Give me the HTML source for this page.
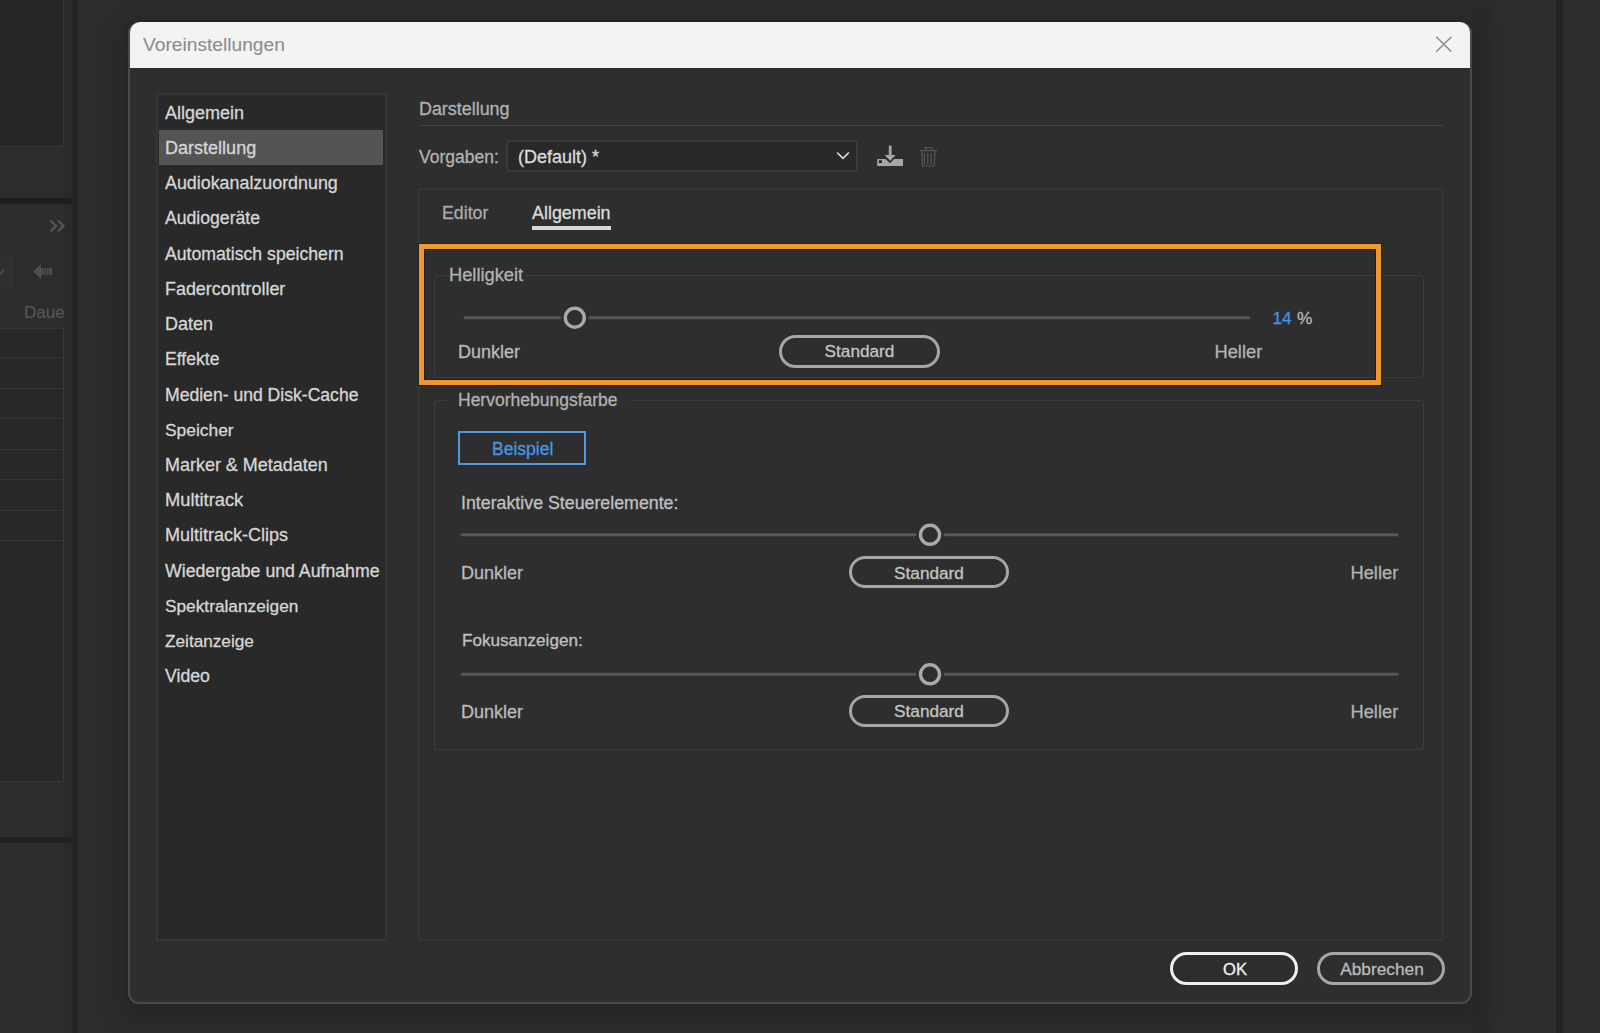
<!DOCTYPE html>
<html><head><meta charset="utf-8">
<style>
*{margin:0;padding:0;box-sizing:border-box}
html,body{width:1600px;height:1033px;overflow:hidden;background:#2c2c2c;font-family:"Liberation Sans",sans-serif}
.a{position:absolute}
.t{position:absolute;white-space:nowrap;font-size:17.5px;line-height:20px;color:#cfcfcf;-webkit-text-stroke:0.3px currentColor}
.bl{position:absolute;background:#1f1f1f}
.btn{position:absolute;border:3px solid #a6a6a6;border-radius:17px}
.track{position:absolute;height:3px;background:#575757}
.thumb{position:absolute;width:23px;height:23px;border:3px solid #a8a8a8;border-radius:50%;background:#2e2e2e}
</style></head><body>

<!-- background app -->
<div class="a" style="left:0;top:0;width:64px;height:147px;background:#262626;border-right:1px solid #363636;border-bottom:1px solid #363636"></div>
<div class="a" style="left:64px;top:0;width:8px;height:1033px;background:#2a2a2a"></div>
<div class="a" style="left:0;top:198px;width:72px;height:6px;background:#1f1f1f"></div>
<div class="a" style="left:0;top:256px;width:14px;height:32px;background:#303030"></div>
<svg class="a" style="left:0;top:262px" width="12" height="16" viewBox="0 0 12 16"><path d="M0 12L4 8" stroke="#4a4a4a" stroke-width="2" fill="none"/></svg>
<svg class="a" style="left:49px;top:219px" width="17" height="14" viewBox="0 0 17 14"><path d="M1.5 1.5L7 7L1.5 12.5M9 1.5L14.5 7L9 12.5" stroke="#555" stroke-width="2.4" fill="none"/></svg>
<svg class="a" style="left:32px;top:263px" width="21" height="17" viewBox="0 0 21 17"><path d="M1 8.5L9 1V5h11v7H9v4z" fill="#4e4e4e"/><path d="M12 5v7M14.5 5v7M17 5v7" stroke="#2c2c2c" stroke-width="0.8"/></svg>
<div class="t" style="left:24px;top:303px;color:#555;font-size:17px">Daue</div>
<div class="a" style="left:17px;top:297px;width:1px;height:31px;background:#303030"></div>
<div class="a" style="left:0;top:328px;width:64px;height:454px;background:#282828;border-right:1px solid #383838;border-bottom:1px solid #383838;border-top:1px solid #383838"></div>
<div class="a" style="left:0;top:357px;width:64px;height:1px;background:#363636"></div>
<div class="a" style="left:0;top:388px;width:64px;height:1px;background:#363636"></div>
<div class="a" style="left:0;top:418px;width:64px;height:1px;background:#363636"></div>
<div class="a" style="left:0;top:449px;width:64px;height:1px;background:#363636"></div>
<div class="a" style="left:0;top:479px;width:64px;height:1px;background:#363636"></div>
<div class="a" style="left:0;top:510px;width:64px;height:1px;background:#363636"></div>
<div class="a" style="left:0;top:540px;width:64px;height:1px;background:#363636"></div>
<div class="a" style="left:0;top:837px;width:72px;height:6px;background:#222"></div>
<div class="a" style="left:72px;top:0;width:6px;height:1033px;background:#232323"></div>
<div class="a" style="left:1472px;top:0;width:18px;height:1033px;background:#2a2a2a"></div>
<div class="a" style="left:1556px;top:0;width:7px;height:1033px;background:#232323"></div>

<!-- dialog -->
<div class="a" style="left:126px;top:20px;width:1348px;height:988px;border-radius:13px;background:#262626;box-shadow:0 8px 24px 6px rgba(0,0,0,0.14)"></div>
<div class="a" style="left:128px;top:22px;width:1344px;height:982px;border-radius:11px;background:#2e2e2e;border:2px solid #4a4a4a;border-top:0"></div>
<div class="a" style="left:130px;top:22px;width:1340px;height:46px;border-radius:10px 10px 0 0;background:#f3f3f3"></div>
<div class="t" style="left:143px;top:34.5px;font-size:19.2px;color:#8c8c8c;-webkit-text-stroke:0.1px #8c8c8c">Voreinstellungen</div>
<svg class="a" style="left:1434px;top:34px" width="20" height="20" viewBox="0 0 20 20"><path d="M2.2 2.7L17.4 17.7M17.4 2.7L2.2 17.7" stroke="#8a8a8a" stroke-width="1.4" fill="none"/></svg>

<!-- list -->
<div class="a" style="left:156px;top:93px;width:231px;height:848px;background:#292929;border:2px solid #363636"></div>
<div class="a" style="left:158px;top:200px;width:227px;height:1px;background:#2c2c2c"></div><div class="a" style="left:158px;top:235px;width:227px;height:1px;background:#2c2c2c"></div><div class="a" style="left:158px;top:270px;width:227px;height:1px;background:#2c2c2c"></div><div class="a" style="left:158px;top:306px;width:227px;height:1px;background:#2c2c2c"></div><div class="a" style="left:158px;top:341px;width:227px;height:1px;background:#2c2c2c"></div><div class="a" style="left:158px;top:376px;width:227px;height:1px;background:#2c2c2c"></div><div class="a" style="left:158px;top:411px;width:227px;height:1px;background:#2c2c2c"></div><div class="a" style="left:158px;top:446px;width:227px;height:1px;background:#2c2c2c"></div><div class="a" style="left:158px;top:481px;width:227px;height:1px;background:#2c2c2c"></div><div class="a" style="left:158px;top:517px;width:227px;height:1px;background:#2c2c2c"></div><div class="a" style="left:158px;top:552px;width:227px;height:1px;background:#2c2c2c"></div><div class="a" style="left:158px;top:587px;width:227px;height:1px;background:#2c2c2c"></div><div class="a" style="left:158px;top:622px;width:227px;height:1px;background:#2c2c2c"></div><div class="a" style="left:158px;top:657px;width:227px;height:1px;background:#2c2c2c"></div><div class="a" style="left:158px;top:693px;width:227px;height:1px;background:#2c2c2c"></div>
<div class="a" style="left:159px;top:130px;width:224px;height:35px;background:#545454"></div>
<div class="t" style="left:165px;top:103px;color:#d6d6d6;font-size:18.0px">Allgemein</div>
<div class="t" style="left:165px;top:138px;color:#d6d6d6;font-size:18.05px">Darstellung</div>
<div class="t" style="left:165px;top:173px;color:#d6d6d6;font-size:17.87px">Audiokanalzuordnung</div>
<div class="t" style="left:165px;top:208px;color:#d6d6d6;font-size:17.61px">Audiogeräte</div>
<div class="t" style="left:165px;top:244px;color:#d6d6d6;font-size:17.67px">Automatisch speichern</div>
<div class="t" style="left:165px;top:279px;color:#d6d6d6;font-size:17.9px">Fadercontroller</div>
<div class="t" style="left:165px;top:314px;color:#d6d6d6;font-size:17.99px">Daten</div>
<div class="t" style="left:165px;top:349px;color:#d6d6d6;font-size:17.6px">Effekte</div>
<div class="t" style="left:165px;top:385px;color:#d6d6d6;font-size:17.59px">Medien- und Disk-Cache</div>
<div class="t" style="left:165px;top:420px;color:#d6d6d6;font-size:17.39px">Speicher</div>
<div class="t" style="left:165px;top:455px;color:#d6d6d6;font-size:17.97px">Marker &amp; Metadaten</div>
<div class="t" style="left:165px;top:490px;color:#d6d6d6;font-size:18.3px">Multitrack</div>
<div class="t" style="left:165px;top:525px;color:#d6d6d6;font-size:18.0px">Multitrack-Clips</div>
<div class="t" style="left:165px;top:561px;color:#d6d6d6;font-size:17.72px">Wiedergabe und Aufnahme</div>
<div class="t" style="left:165px;top:596px;color:#d6d6d6;font-size:17.28px">Spektralanzeigen</div>
<div class="t" style="left:165px;top:631px;color:#d6d6d6;font-size:17.2px">Zeitanzeige</div>
<div class="t" style="left:165px;top:666px;color:#d6d6d6;font-size:17.68px">Video</div>

<!-- right panel header -->
<div class="t" style="left:419px;top:99px;color:#b2b2b2;font-size:17.9px">Darstellung</div>
<div class="a" style="left:418px;top:125px;width:1025px;height:1px;background:#444"></div>
<div class="t" style="left:419px;top:147px;color:#b2b2b2">Vorgaben:</div>
<div class="a" style="left:506px;top:140px;width:352px;height:32px;background:#292929;border:2px solid #3a3a3a;border-radius:3px"></div>
<div class="t" style="left:518px;top:147px;color:#dcdcdc;font-size:18px">(Default) *</div>
<svg class="a" style="left:835px;top:150px" width="16" height="12" viewBox="0 0 16 12"><path d="M2.1 2.5L8 8.4L13.9 2.5" stroke="#dedede" stroke-width="1.6" fill="none"/></svg>
<svg class="a" style="left:876px;top:144px" width="30" height="24" viewBox="0 0 30 24"><path d="M1.2 14.9H9.6L13.9 19.2L18.2 14.9H27V22.1H1.2Z" fill="#a6a6a6"/><rect x="2.9" y="16.3" width="3" height="2.8" fill="#1e1e1e"/><path d="M12.8 1.8H15.6V11H19.6L14.2 16.8L8.6 11H12.8Z" fill="#a6a6a6"/></svg>
<svg class="a" style="left:916px;top:144px" width="24" height="24" viewBox="0 0 24 24"><path d="M4.2 6.6H21M9.3 6.4V3.6H16V6.4M5.8 7l0.8 15h11.6l0.8-15M8.4 9.2V20M11.8 9.2V20M15.2 9.2V20" stroke="#555" stroke-width="1.2" fill="none"/></svg>
<!-- tab panel -->
<div class="a" style="left:418px;top:188px;width:1026px;height:753px;border:2px solid #363636;border-radius:2px;background:#2e2e2e"></div>
<div class="t" style="left:442px;top:203px;color:#aaaaaa;font-size:17.75px">Editor</div>
<div class="t" style="left:532px;top:203px;color:#dcdcdc;font-size:17.9px">Allgemein</div>
<div class="a" style="left:532px;top:226px;width:79px;height:4px;background:#d8d8d8"></div>

<!-- Helligkeit -->
<div class="a" style="left:434px;top:275px;width:990px;height:103px;border-radius:3px;border:1px solid #3c3c3c"></div>
<div class="a" style="left:446px;top:265px;width:80px;height:20px;background:#2e2e2e"></div>
<div class="t" style="left:449px;top:265px;color:#b2b2b2;font-size:18.3px">Helligkeit</div>
<svg class="a" style="left:463px;top:303px" width="788" height="28"><path d="M2 14.699999999999989H96.8M126.8 14.699999999999989H786" stroke="#575757" stroke-width="3" stroke-linecap="round"/><circle cx="111.79999999999995" cy="14.699999999999989" r="9.5" fill="#2e2e2e" stroke="#a9a9a9" stroke-width="3.4"/></svg>
<div class="t" style="left:1272.5px;top:308px;color:#4292e6;font-size:17.3px">14</div>
<div class="t" style="left:1297px;top:308px;color:#b8b8b8;font-size:17.3px">%</div>
<div class="t" style="left:458px;top:342px;color:#bababa;font-size:18px">Dunkler</div>
<div class="btn" style="left:779px;top:335px;width:161px;height:33px"></div>
<div class="t" style="left:779px;top:341px;width:161px;text-align:center;color:#c4c4c4;font-size:17.2px">Standard</div>
<div class="t" style="left:1214.5px;top:342px;color:#b2b2b2;font-size:18.3px">Heller</div>
<div class="a" style="left:419px;top:244px;width:962px;height:141px;border:5px solid #f0982f;box-shadow:inset 0 0 0 1px #1e1e1e,0 0 0 1px #222"></div>

<!-- Hervorhebungsfarbe -->
<div class="a" style="left:434px;top:400px;width:990px;height:350px;border-radius:3px;border:1px solid #3c3c3c"></div>
<div class="a" style="left:448px;top:390px;width:182px;height:20px;background:#2e2e2e"></div>
<div class="t" style="left:458px;top:390px;color:#b2b2b2">Hervorhebungsfarbe</div>
<div class="a" style="left:458px;top:431px;width:128px;height:34px;border:2px solid #4e9ae2"></div>
<div class="t" style="left:492px;top:439px;color:#4896e4">Beispiel</div>

<div class="t" style="left:461px;top:493px;color:#c0c0c0;font-size:17.8px">Interaktive Steuerelemente:</div>
<svg class="a" style="left:460px;top:520px" width="939" height="28"><path d="M2 14.799999999999955H455.0M485.0 14.799999999999955H937" stroke="#575757" stroke-width="3" stroke-linecap="round"/><circle cx="470" cy="14.799999999999955" r="9.5" fill="#2e2e2e" stroke="#a9a9a9" stroke-width="3.4"/></svg>
<div class="t" style="left:461px;top:563px;color:#bababa;font-size:18px">Dunkler</div>
<div class="btn" style="left:849px;top:556px;width:160px;height:32px"></div>
<div class="t" style="left:849px;top:563px;width:160px;text-align:center;color:#c4c4c4;font-size:17.2px">Standard</div>
<div class="t" style="left:1350.5px;top:563px;color:#b2b2b2;font-size:18.3px">Heller</div>

<div class="t" style="left:462px;top:631px;color:#c0c0c0;font-size:17.1px">Fokusanzeigen:</div>
<svg class="a" style="left:460px;top:660px" width="939" height="28"><path d="M2 14.299999999999955H455.0M485.0 14.299999999999955H937" stroke="#575757" stroke-width="3" stroke-linecap="round"/><circle cx="470" cy="14.299999999999955" r="9.5" fill="#2e2e2e" stroke="#a9a9a9" stroke-width="3.4"/></svg>
<div class="t" style="left:461px;top:702px;color:#bababa;font-size:18px">Dunkler</div>
<div class="btn" style="left:849px;top:695px;width:160px;height:32px"></div>
<div class="t" style="left:849px;top:701px;width:160px;text-align:center;color:#c4c4c4;font-size:17.2px">Standard</div>
<div class="t" style="left:1350.5px;top:702px;color:#b2b2b2;font-size:18.3px">Heller</div>

<!-- bottom buttons -->
<div class="btn" style="left:1170px;top:952px;width:128px;height:33px;border-color:#f0f0f0"></div>
<div class="t" style="left:1171px;top:960px;width:128px;text-align:center;color:#f2f2f2;font-size:16.6px">OK</div>
<div class="btn" style="left:1317px;top:952px;width:128px;height:33px;border-color:#a6a6a6"></div>
<div class="t" style="left:1318px;top:959px;width:128px;text-align:center;color:#bababa;font-size:17.3px">Abbrechen</div>

</body></html>
